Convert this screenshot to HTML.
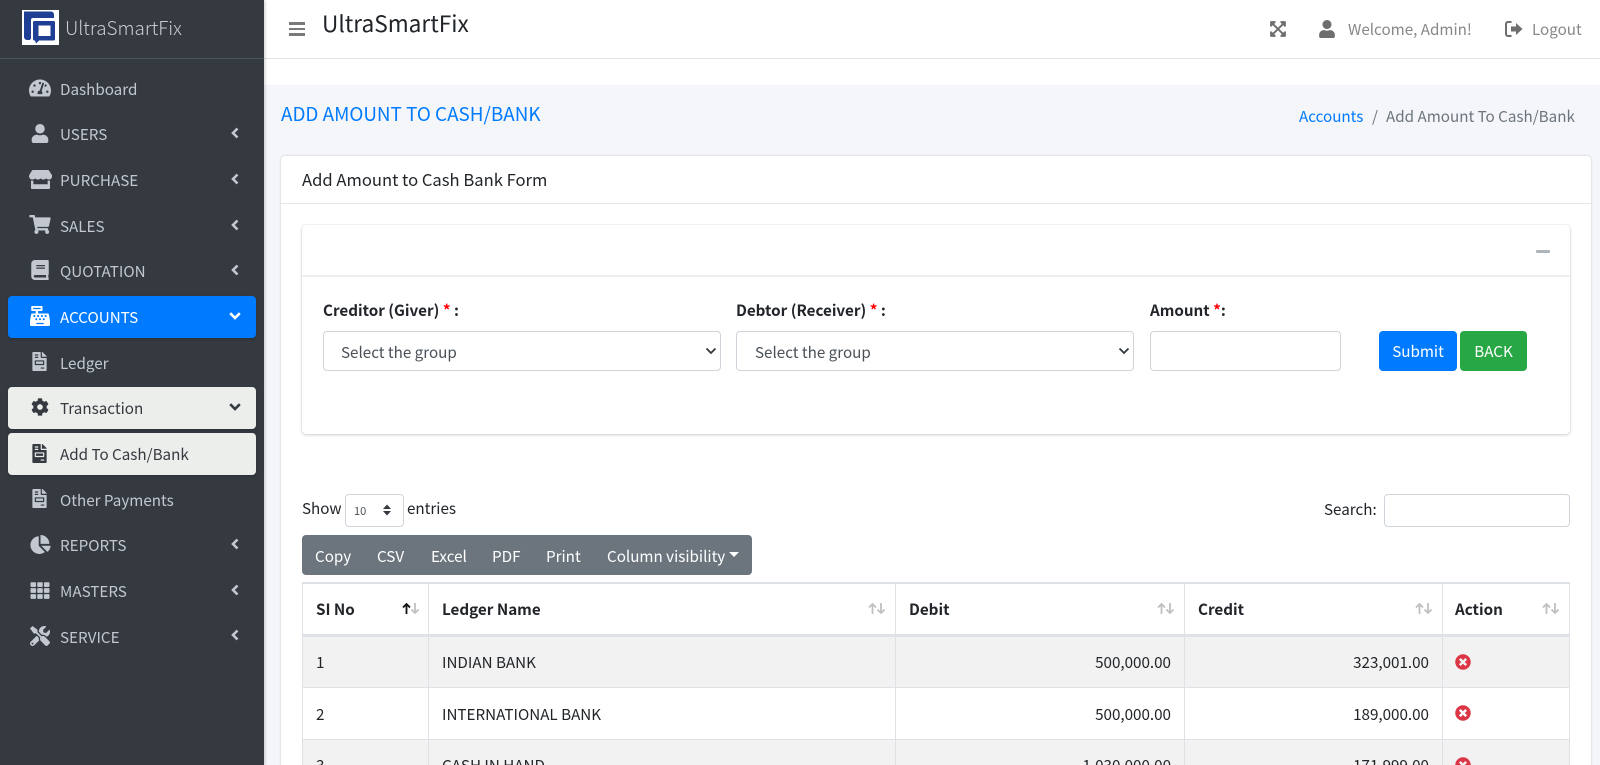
<!DOCTYPE html>
<html lang="en"><head><meta charset="utf-8"><title>UltraSmartFix</title>
<style>
*{box-sizing:border-box}
html,body{margin:0;padding:0;width:1600px;height:765px;overflow:hidden;background:#f4f6f9}
body{position:relative;font-family:"Noto Sans CJK JP","Liberation Sans",sans-serif;font-size:15.2px;color:#212529}
.t{position:absolute;white-space:nowrap;line-height:24px;height:24px}
.b{position:absolute}
svg.i{position:absolute;display:block;fill:currentColor}
.side{color:#c2c7d0}
.box{position:absolute;left:8px;width:248px;height:42px;border-radius:4px}
.r{text-align:right}
.th{font-weight:700}
.sort{position:absolute;top:603px;width:18px;height:11px;fill:none;stroke-width:1.8}
.ctl{position:absolute;background:#fff;border:1px solid #ced4da;border-radius:4px}
</style></head><body>
<svg width="0" height="0" style="position:absolute">
<symbol id="user" viewBox="0 0 448 512"><path d="M224 256c70.7 0 128-57.3 128-128S294.7 0 224 0 96 57.3 96 128s57.3 128 128 128zm89.6 32h-16.7c-22.2 10.2-46.9 16-72.9 16s-50.6-5.8-72.9-16h-16.7C60.2 288 0 348.2 0 422.4V464c0 26.5 21.5 48 48 48h352c26.5 0 48-21.5 48-48v-41.6c0-74.2-60.2-134.4-134.4-134.4z"/></symbol>
<symbol id="cart" viewBox="0 0 576 512"><path d="M528.12 301.319l47.273-208C578.806 78.301 567.391 64 551.99 64H159.208l-9.166-44.81C147.758 8.021 137.93 0 126.529 0H24C10.745 0 0 10.745 0 24v16c0 13.255 10.745 24 24 24h69.883l70.248 343.435C147.325 417.1 136 435.222 136 456c0 30.928 25.072 56 56 56s56-25.072 56-56c0-15.674-6.447-29.835-16.824-40h209.647C430.447 426.165 424 440.326 424 456c0 30.928 25.072 56 56 56s56-25.072 56-56c0-22.172-12.888-41.332-31.579-50.405l5.517-24.276c3.413-15.018-8.002-29.319-23.403-29.319H218.117l-6.545-32h293.145c11.206 0 20.92-7.754 23.403-18.681z"/></symbol>
<symbol id="cog" viewBox="0 0 512 512"><path d="M487.4 315.7l-42.6-24.6c4.3-23.2 4.3-47 0-70.2l42.6-24.6c4.9-2.8 7.1-8.6 5.5-14-11.1-35.6-30-67.8-54.7-94.6-3.8-4.1-10-5.1-14.8-2.3L380.8 110c-17.9-15.4-38.5-27.3-60.8-35.1V25.8c0-5.6-3.9-10.5-9.4-11.7-36.7-8.2-74.3-7.8-109.2 0-5.5 1.2-9.4 6.1-9.4 11.7V75c-22.2 7.9-42.8 19.8-60.8 35.1L88.7 85.5c-4.9-2.8-11-1.9-14.8 2.3-24.7 26.7-43.6 58.9-54.7 94.6-1.7 5.4.6 11.2 5.5 14L67.3 221c-4.3 23.2-4.3 47 0 70.2l-42.6 24.6c-4.9 2.8-7.1 8.6-5.5 14 11.1 35.6 30 67.8 54.7 94.6 3.8 4.1 10 5.1 14.8 2.3l42.6-24.6c17.9 15.4 38.5 27.3 60.8 35.1v49.2c0 5.6 3.9 10.5 9.4 11.7 36.7 8.2 74.3 7.8 109.2 0 5.5-1.2 9.4-6.1 9.4-11.7v-49.2c22.2-7.9 42.8-19.8 60.8-35.1l42.6 24.6c4.9 2.8 11 1.9 14.8-2.3 24.7-26.7 43.6-58.9 54.7-94.6 1.5-5.5-.7-11.3-5.6-14.1zM256 336c-44.1 0-80-35.9-80-80s35.9-80 80-80 80 35.9 80 80-35.9 80-80 80z"/></symbol>
<symbol id="xc" viewBox="0 0 512 512"><path d="M256 8C119 8 8 119 8 256s111 248 248 248 248-111 248-248S393 8 256 8zm121.6 313.1c4.7 4.7 4.7 12.3 0 17L338 377.6c-4.7 4.7-12.3 4.7-17 0L256 312l-65.1 65.6c-4.7 4.7-12.3 4.7-17 0L134.4 338c-4.7-4.7-4.7-12.3 0-17l65.6-65-65.6-65.1c-4.7-4.7-4.7-12.3 0-17l39.6-39.6c4.7-4.7 12.3-4.7 17 0l65 65.7 65.1-65.6c4.7-4.7 12.3-4.7 17 0l39.6 39.6c4.7 4.7 4.7 12.3 0 17L312 256l65.6 65.1z"/></symbol>
<symbol id="file" viewBox="0 0 384 512"><path d="M377 105L279.1 7c-4.5-4.5-10.6-7-17-7H256v128h128v-6.1c0-6.3-2.5-12.4-7-16.9zm-153 31V0H24C10.7 0 0 10.7 0 24v464c0 13.3 10.7 24 24 24h336c13.3 0 24-10.7 24-24V160H248c-13.2 0-24-10.8-24-24zM64 72c0-4.42 3.58-8 8-8h80c4.42 0 8 3.58 8 8v16c0 4.42-3.58 8-8 8H72c-4.42 0-8-3.58-8-8V72zm0 64c0-4.42 3.58-8 8-8h80c4.42 0 8 3.58 8 8v16c0 4.42-3.58 8-8 8H72c-4.42 0-8-3.58-8-8v-16zm256 304c0 4.42-3.58 8-8 8h-80c-4.42 0-8-3.58-8-8v-16c0-4.42 3.58-8 8-8h80c4.42 0 8 3.58 8 8v16zm0-200v96c0 8.84-7.16 16-16 16H80c-8.84 0-16-7.16-16-16v-96c0-8.84 7.16-16 16-16h224c8.84 0 16 7.16 16 16zm-32 16H96v64h192v-64z" fill-rule="evenodd"/></symbol>
</svg>

<!-- top navbar -->
<div class="b" style="left:264px;top:0;width:1336px;height:85px;background:#fff"></div>
<div class="b" style="left:264px;top:58px;width:1336px;height:1px;background:#dee2e6"></div>
<div class="b" style="left:289px;top:22px;width:16px;height:2.5px;background:#7a7a7a"></div>
<div class="b" style="left:289px;top:27.500px;width:16px;height:2.5px;background:#7a7a7a"></div>
<div class="b" style="left:289px;top:33px;width:16px;height:2.5px;background:#7a7a7a"></div>
<div class="t" style="left:322px;top:11px;font-size:22.65px;color:#212529">UltraSmartFix</div>
<svg class="i" style="left:1270px;top:20px;color:#6e6e6e" width="16" height="18" viewBox="0 0 448 512"><path d="M448 344v112a23.94 23.94 0 0 1-24 24H312c-21.39 0-32.09-25.9-17-41l36.2-36.2L224 295.6 116.77 402.9 153 439c15.09 15.1 4.39 41-17 41H24a23.94 23.94 0 0 1-24-24V344c0-21.4 25.89-32.1 41-17l36.19 36.2L184.46 256 77.18 148.7 41 185c-15.1 15.1-41 4.4-41-17V56a23.94 23.94 0 0 1 24-24h112c21.39 0 32.09 25.9 17 41l-36.2 36.2L224 216.4l107.23-107.3L295 73c-15.09-15.1-4.39-41 17-41h112a23.94 23.94 0 0 1 24 24v112c0 21.4-25.89 32.1-41 17l-36.19-36.2L263.54 256l107.28 107.3L407 327.1c15.1-15.2 41-4.5 41 16.9z"/></svg>
<svg class="i" style="left:1319px;top:20px;color:#6e6e6e" width="16" height="18"><use href="#user"/></svg>
<div class="t" style="left:1348px;top:17px;color:#888">Welcome, Admin!</div>
<svg class="i" style="left:1505px;top:20px;color:#6e6e6e" width="18" height="18" viewBox="0 0 18 18"><path d="M6.500 2H3a2 2 0 0 0-2 2v10a2 2 0 0 0 2 2h3.500" fill="none" stroke="currentColor" stroke-width="2"/><path d="M17.500 9l-6.500-6v3.500H6v5h5V15z"/></svg>
<div class="t" style="left:1532px;top:17px;color:#888">Logout</div>

<!-- sidebar -->
<div class="b" style="left:0;top:0;width:264px;height:765px;background:#343a40;box-shadow:1px 0 3px rgba(0,0,0,.2)"></div>
<div class="b" style="left:0;top:58px;width:264px;height:1px;background:#4b545c"></div>
<svg class="b" style="left:22px;top:10px" width="37" height="35" viewBox="0 0 37 35"><rect width="37" height="35" fill="#fff"/><path d="M2 1.500h27a3 3 0 0 1 3 3V8H11a2 2 0 0 0-2 2v18c0 1-.7 2-2 2H5a3 3 0 0 1-3-3z" fill="#1f3f94"/><path d="M12.500 11h19a1.500 1.500 0 0 1 1.500 1.500V29a1.500 1.500 0 0 1-1.500 1.500H17l-3 3-1-3h-.5a1.500 1.500 0 0 1-1.500-1.500V12.500a1.500 1.500 0 0 1 1.500-1.500zM16.500 15.500v10.500h12V15.500z" fill="#1f3f94" fill-rule="evenodd"/></svg>
<div class="t" style="left:65px;top:16px;font-size:18.85px;font-weight:300;color:#c8ccd2">UltraSmartFix</div>

<div class="box" style="top:296px;background:#007bff;box-shadow:0 1px 3px rgba(0,0,0,.2)"></div>
<div class="box" style="top:387px;background:#eceeec;box-shadow:0 1px 3px rgba(0,0,0,.2)"></div>
<div class="box" style="top:433px;background:#eceeec;box-shadow:0 1px 3px rgba(0,0,0,.2)"></div>

<div class="t side" style="left:60px;top:77px">Dashboard</div>
<div class="t side" style="left:60px;top:122px">USERS</div>
<div class="t side" style="left:60px;top:168px">PURCHASE</div>
<div class="t side" style="left:60px;top:214px">SALES</div>
<div class="t side" style="left:60px;top:259px">QUOTATION</div>
<div class="t" style="left:60px;top:305px;color:#fff">ACCOUNTS</div>
<div class="t side" style="left:60px;top:351px">Ledger</div>
<div class="t" style="left:60px;top:396px;color:#343a40">Transaction</div>
<div class="t" style="left:60px;top:442px;color:#343a40">Add To Cash/Bank</div>
<div class="t side" style="left:60px;top:488px">Other Payments</div>
<div class="t side" style="left:60px;top:533px">REPORTS</div>
<div class="t side" style="left:60px;top:579px">MASTERS</div>
<div class="t side" style="left:60px;top:625px">SERVICE</div>

<svg class="i side" style="left:29px;top:78px" width="22" height="20" viewBox="0 0 576 512"><path d="M288 32C128.94 32 0 160.94 0 320c0 52.8 14.25 102.26 39.06 144.8 5.61 9.62 16.3 15.2 27.44 15.2h443c11.14 0 21.83-5.58 27.44-15.2C561.75 422.26 576 372.8 576 320c0-159.06-128.94-288-288-288zm0 64c14.71 0 26.58 10.13 30.32 23.65-1.11 2.26-2.64 4.23-3.45 6.67l-9.22 27.67c-5.13 3.49-10.97 6.01-17.64 6.01-17.67 0-32-14.33-32-32S270.33 96 288 96zM96 384c-17.67 0-32-14.33-32-32s14.33-32 32-32 32 14.33 32 32-14.33 32-32 32zm48-160c-17.67 0-32-14.33-32-32s14.33-32 32-32 32 14.33 32 32-14.33 32-32 32zm246.77-72.41l-61.33 184C343.13 347.33 352 364.54 352 384c0 11.72-3.38 22.55-8.88 32H232.88c-5.5-9.45-8.88-20.28-8.88-32 0-33.94 26.5-61.43 59.9-63.59l61.34-184.01c4.17-12.56 17.73-19.45 30.36-15.17 12.57 4.19 19.35 17.79 15.17 30.36zm14.66 57.2l15.52-46.55c3.47-1.29 7.13-2.23 11.05-2.23 17.67 0 32 14.33 32 32s-14.33 32-32 32c-11.38-.01-20.89-6.28-26.57-15.22zM480 384c-17.67 0-32-14.33-32-32s14.33-32 32-32 32 14.33 32 32-14.33 32-32 32z"/></svg>
<svg class="i side" style="left:31px;top:124px" width="18" height="19"><use href="#user"/></svg>
<svg class="i side" style="left:29px;top:170px" width="23" height="19" viewBox="0 0 616 512"><path d="M602 118.6L537.1 15C531.3 5.7 521 0 510 0H106C95 0 84.7 5.7 78.9 15L14 118.6c-33.9 54.1-3.9 129.3 59.4 137.9 4.6.6 9.2.9 13.7.9 29.9 0 56.4-13.1 74.6-33.4 18.2 20.3 44.8 33.4 74.6 33.4 29.9 0 56.4-13.1 74.6-33.4 18.2 20.3 44.8 33.4 74.6 33.4 29.9 0 56.4-13.1 74.6-33.4 18.3 20.3 44.8 33.4 74.6 33.4 4.6 0 9.1-.3 13.7-.9 63.5-8.5 93.6-83.7 59.6-137.9zM529.5 288c-10 0-19.9-1.5-29.5-3.8V384H116v-99.8c-9.6 2.2-19.5 3.8-29.5 3.8-6 0-12.1-.4-18-1.2-5.6-.8-11.1-2.1-16.4-3.6V480c0 17.7 14.3 32 32 32h448c17.7 0 32-14.3 32-32V283.2c-5.4 1.6-10.8 2.9-16.4 3.6-6.1.8-12.1 1.2-18.2 1.2z"/></svg>
<svg class="i side" style="left:29px;top:215px" width="22" height="19"><use href="#cart"/></svg>
<svg class="i side" style="left:31px;top:260px" width="18" height="20" viewBox="0 0 448 512"><path d="M448 360V24c0-13.3-10.7-24-24-24H96C43 0 0 43 0 96v320c0 53 43 96 96 96h328c13.3 0 24-10.7 24-24v-16c0-7.5-3.5-14.3-8.9-18.7-4.2-15.4-4.2-59.3 0-74.7 5.4-4.3 8.9-11.1 8.9-18.6zM128 134c0-3.3 2.7-6 6-6h212c3.3 0 6 2.7 6 6v20c0 3.3-2.7 6-6 6H134c-3.3 0-6-2.7-6-6v-20zm0 64c0-3.3 2.7-6 6-6h212c3.3 0 6 2.7 6 6v20c0 3.3-2.7 6-6 6H134c-3.3 0-6-2.7-6-6v-20zm253.4 250H96c-17.7 0-32-14.3-32-32 0-17.6 14.4-32 32-32h285.4c-1.9 17.1-1.9 46.9 0 64z"/></svg>
<svg class="i" style="left:30px;top:306px;color:#fff" width="20" height="20" viewBox="0 0 512 512"><path d="M511.1 378.8l-26.7-160c-2.6-15.4-15.9-26.7-31.6-26.7H208v-64h96c8.8 0 16-7.2 16-16V16c0-8.8-7.2-16-16-16H48c-8.8 0-16 7.2-16 16v96c0 8.8 7.2 16 16 16h96v64H59.1c-15.6 0-29 11.3-31.6 26.7L.8 378.7c-.6 3.5-.9 7-.9 10.5V480c0 17.7 14.3 32 32 32h448c17.7 0 32-14.3 32-32v-90.7c.1-3.5-.2-7-.8-10.5zM280 248c0-8.8 7.2-16 16-16h16c8.8 0 16 7.2 16 16v16c0 8.8-7.2 16-16 16h-16c-8.8 0-16-7.2-16-16v-16zm-32 64h16c8.8 0 16 7.2 16 16v16c0 8.8-7.2 16-16 16h-16c-8.8 0-16-7.2-16-16v-16c0-8.8 7.2-16 16-16zm-32-80c8.8 0 16 7.2 16 16v16c0 8.8-7.2 16-16 16h-16c-8.8 0-16-7.2-16-16v-16c0-8.8 7.2-16 16-16h16zM80 80V48h192v32H80zm40 200h-16c-8.8 0-16-7.2-16-16v-16c0-8.8 7.2-16 16-16h16c8.8 0 16 7.2 16 16v16c0 8.8-7.2 16-16 16zm16 64v-16c0-8.8 7.2-16 16-16h16c8.8 0 16 7.2 16 16v16c0 8.8-7.2 16-16 16h-16c-8.8 0-16-7.2-16-16zm216 112c0 4.4-3.6 8-8 8H168c-4.4 0-8-3.6-8-8v-16c0-4.4 3.6-8 8-8h176c4.4 0 8 3.6 8 8v16zm24-112c0 8.8-7.2 16-16 16h-16c-8.8 0-16-7.2-16-16v-16c0-8.8 7.2-16 16-16h16c8.8 0 16 7.2 16 16v16zm48-80c0 8.8-7.2 16-16 16h-16c-8.8 0-16-7.2-16-16v-16c0-8.8 7.2-16 16-16h16c8.8 0 16 7.2 16 16v16z"/></svg>
<svg class="i side" style="left:32px;top:352px" width="15" height="19"><use href="#file"/></svg>
<svg class="i" style="left:31px;top:398px;color:#343a40" width="18" height="18"><use href="#cog"/></svg>
<svg class="i" style="left:32px;top:444px;color:#343a40" width="15" height="19"><use href="#file"/></svg>
<svg class="i side" style="left:32px;top:489px" width="15" height="19"><use href="#file"/></svg>
<svg class="i side" style="left:30px;top:535px" width="21" height="19" viewBox="0 0 544 512"><path d="M527.79 288H290.5l158.03 158.03c6.04 6.04 15.98 6.53 22.19.68 38.7-36.46 65.32-85.61 73.13-140.86 1.34-9.46-6.51-17.85-16.06-17.85zm-15.83-64.8C503.72 103.74 408.26 8.28 288.8.04 279.68-.59 272 7.1 272 16.24V240h223.77c9.14 0 16.82-7.68 16.19-16.8zM224 288V50.71c0-9.55-8.39-17.4-17.84-16.06C86.99 51.49-4.1 155.6.14 280.37 4.5 408.51 114.83 513.59 243.03 511.98c50.4-.63 96.97-16.87 135.26-44.03 7.9-5.6 8.42-17.23 1.57-24.08z"/></svg>
<svg class="i side" style="left:30px;top:581px" width="20" height="19" viewBox="0 0 512 512"><path d="M149.333 56v80c0 13.255-10.745 24-24 24H24c-13.255 0-24-10.745-24-24V56c0-13.255 10.745-24 24-24h101.333c13.255 0 24 10.745 24 24zm181.334 240v-80c0-13.255-10.745-24-24-24H205.333c-13.255 0-24 10.745-24 24v80c0 13.255 10.745 24 24 24h101.333c13.256 0 24.001-10.745 24.001-24zm32-240v80c0 13.255 10.745 24 24 24H488c13.255 0 24-10.745 24-24V56c0-13.255-10.745-24-24-24H386.667c-13.255 0-24 10.745-24 24zm-32 80V56c0-13.255-10.745-24-24-24H205.333c-13.255 0-24 10.745-24 24v80c0 13.255 10.745 24 24 24h101.333c13.256 0 24.001-10.745 24.001-24zm-205.334 56H24c-13.255 0-24 10.745-24 24v80c0 13.255 10.745 24 24 24h101.333c13.255 0 24-10.745 24-24v-80c0-13.255-10.745-24-24-24zM0 376v80c0 13.255 10.745 24 24 24h101.333c13.255 0 24-10.745 24-24v-80c0-13.255-10.745-24-24-24H24c-13.255 0-24 10.745-24 24zm386.667-56H488c13.255 0 24-10.745 24-24v-80c0-13.255-10.745-24-24-24H386.667c-13.255 0-24 10.745-24 24v80c0 13.255 10.745 24 24 24zm0 160H488c13.255 0 24-10.745 24-24v-80c0-13.255-10.745-24-24-24H386.667c-13.255 0-24 10.745-24 24v80c0 13.255 10.745 24 24 24zM181.333 376v80c0 13.255 10.745 24 24 24h101.333c13.255 0 24-10.745 24-24v-80c0-13.255-10.745-24-24-24H205.333c-13.255 0-24 10.745-24 24z"/></svg>
<svg class="i side" style="left:30px;top:626px" width="20" height="20" viewBox="0 0 512 512"><path d="M501.1 395.7L384 278.6c-23.1-23.1-57.6-27.6-85.4-13.9L192 158.1V96L64 0 0 64l96 128h62.1l106.6 106.6c-13.6 27.8-9.2 62.3 13.9 85.4l117.1 117.1c14.6 14.6 38.2 14.6 52.7 0l52.7-52.7c14.5-14.6 14.5-38.2 0-52.7zM331.7 225c28.3 0 54.9 11 74.9 31l19.4 19.4c15.8-6.9 30.8-16.5 43.8-29.5 37.1-37.1 49.7-89.3 37.9-136.7-2.2-9-13.5-12.1-20.1-5.5l-74.4 74.4-67.9-11.3L334 98.9l74.4-74.4c6.6-6.6 3.4-17.9-5.7-20.2-47.4-11.7-99.6.9-136.6 37.9-28.5 28.5-41.9 66.1-41.2 103.6l82.1 82.1c8.1-1.9 16.5-2.9 24.7-2.9zm-103.9 82l-56.7-56.7L18.7 402.8c-25 25-25 65.5 0 90.5s65.5 25 90.5 0l123.6-123.6c-7.6-19.9-9.9-41.6-5-62.7zM64 472c-13.2 0-24-10.8-24-24 0-13.3 10.7-24 24-24s24 10.7 24 24c0 13.2-10.7 24-24 24z"/></svg>

<svg class="b" style="left:230px;top:127px" width="10" height="12" fill="none" stroke="#c2c7d0" stroke-width="2.6"><path d="M7.500 1.500L3 6l4.500 4.500"/></svg>
<svg class="b" style="left:230px;top:173px" width="10" height="12" fill="none" stroke="#c2c7d0" stroke-width="2.6"><path d="M7.500 1.500L3 6l4.500 4.500"/></svg>
<svg class="b" style="left:230px;top:219px" width="10" height="12" fill="none" stroke="#c2c7d0" stroke-width="2.6"><path d="M7.500 1.500L3 6l4.500 4.500"/></svg>
<svg class="b" style="left:230px;top:264px" width="10" height="12" fill="none" stroke="#c2c7d0" stroke-width="2.6"><path d="M7.500 1.500L3 6l4.500 4.500"/></svg>
<svg class="b" style="left:229px;top:311px" width="12" height="10" fill="none" stroke="#fff" stroke-width="2.6"><path d="M1.200 2.200L6 7l4.800-4.800"/></svg>
<svg class="b" style="left:229px;top:402px" width="12" height="10" fill="none" stroke="#343a40" stroke-width="2.6"><path d="M1.200 2.200L6 7l4.800-4.800"/></svg>
<svg class="b" style="left:230px;top:538px" width="10" height="12" fill="none" stroke="#c2c7d0" stroke-width="2.6"><path d="M7.500 1.500L3 6l4.500 4.500"/></svg>
<svg class="b" style="left:230px;top:584px" width="10" height="12" fill="none" stroke="#c2c7d0" stroke-width="2.6"><path d="M7.500 1.500L3 6l4.500 4.500"/></svg>
<svg class="b" style="left:230px;top:629px" width="10" height="12" fill="none" stroke="#c2c7d0" stroke-width="2.6"><path d="M7.500 1.500L3 6l4.500 4.500"/></svg>

<!-- page header -->
<div class="t" style="left:281px;top:102px;font-size:18.85px;color:#007bff">ADD AMOUNT TO CASH/BANK</div>
<div class="t" style="left:1299px;top:104px;color:#007bff">Accounts</div>
<div class="t" style="left:1372px;top:104px;color:#6c757d">/</div>
<div class="t" style="left:1386px;top:104px;color:#6c757d">Add Amount To Cash/Bank</div>

<!-- main card -->
<div class="b" style="left:281px;top:156px;width:1310px;height:640px;background:#fff;border-radius:4px;box-shadow:0 0 2px rgba(0,0,0,.2)"></div>
<div class="b" style="left:281px;top:203px;width:1310px;height:1px;background:#e4e6e8"></div>
<div class="t" style="left:302px;top:167px;font-size:16.6px;color:#212529">Add Amount to Cash Bank Form</div>

<!-- inner card -->
<div class="b" style="left:302px;top:225px;width:1268px;height:209px;background:#fff;border-radius:4px;box-shadow:0 0 1px rgba(0,0,0,.2),0 1px 3px rgba(0,0,0,.18)"></div>
<div class="b" style="left:302px;top:275px;width:1268px;height:2px;background:#eceeef"></div>
<div class="b" style="left:1536px;top:250px;width:14px;height:3px;background:#adb5bd;border-radius:1px"></div>

<div class="t" style="left:323px;top:298px;font-weight:700">Creditor (Giver) <span style="color:#f00">*</span> :</div>
<div class="t" style="left:736px;top:298px;font-weight:700">Debtor (Receiver) <span style="color:#f00">*</span> :</div>
<div class="t" style="left:1150px;top:298px;font-weight:700">Amount <span style="color:#f00">*</span>:</div>

<div class="ctl" style="left:323px;top:331px;width:398px;height:40px"></div>
<div class="t" style="left:341px;top:340px;color:#495057">Select the group</div>
<svg class="b" style="left:705px;top:347px" width="12" height="8" fill="none" stroke="#343a40" stroke-width="1.8"><path d="M1.500 1.500L6 6l4.500-4.500"/></svg>
<div class="ctl" style="left:736px;top:331px;width:398px;height:40px"></div>
<div class="t" style="left:755px;top:340px;color:#495057">Select the group</div>
<svg class="b" style="left:1118px;top:347px" width="12" height="8" fill="none" stroke="#343a40" stroke-width="1.8"><path d="M1.500 1.500L6 6l4.500-4.500"/></svg>
<div class="ctl" style="left:1150px;top:331px;width:191px;height:40px"></div>
<div class="b" style="left:1379px;top:331px;width:78px;height:40px;background:#007bff;border-radius:4px"></div>
<div class="t" style="left:1379px;top:339px;width:78px;text-align:center;color:#fff">Submit</div>
<div class="b" style="left:1460px;top:331px;width:67px;height:40px;background:#28a745;border-radius:4px"></div>
<div class="t" style="left:1460px;top:339px;width:67px;text-align:center;color:#fff">BACK</div>

<!-- datatable controls -->
<div class="t" style="left:302px;top:496px">Show</div>
<div class="ctl" style="left:345px;top:494px;width:59px;height:33px"></div>
<div class="t" style="left:354px;top:499px;font-size:11px;color:#495057">10</div>
<svg class="b" style="left:382px;top:504px" width="10" height="12" fill="#343a40"><path d="M1 5l4-4.500 4 4.500zM1 7h8l-4 4.500z"/></svg>
<div class="t" style="left:407px;top:496px">entries</div>
<div class="t" style="left:1324px;top:497px">Search:</div>
<div class="ctl" style="left:1384px;top:494px;width:186px;height:33px"></div>

<div class="b" style="left:302px;top:535px;width:450px;height:40px;background:#6c757d;border-radius:4px"></div>
<div class="t" style="left:315px;top:544px;color:#fff">Copy</div>
<div class="t" style="left:377px;top:544px;color:#fff">CSV</div>
<div class="t" style="left:431px;top:544px;color:#fff">Excel</div>
<div class="t" style="left:492px;top:544px;color:#fff">PDF</div>
<div class="t" style="left:546px;top:544px;color:#fff">Print</div>
<div class="t" style="left:607px;top:544px;color:#fff">Column visibility</div>
<div class="b" style="left:729px;top:552px;width:0;height:0;border:5px solid transparent;border-top-color:#fff;border-bottom:0"></div>

<!-- table -->
<div class="b" style="left:302px;top:637px;width:1268px;height:51px;background:#f2f2f2"></div>
<div class="b" style="left:302px;top:740px;width:1268px;height:25px;background:#f2f2f2"></div>
<div class="b" style="left:302px;top:582px;width:1268px;height:2px;background:#dee2e6"></div>
<div class="b" style="left:302px;top:634px;width:1268px;height:3px;background:#dee2e6"></div>
<div class="b" style="left:302px;top:687px;width:1268px;height:1px;background:#dee2e6"></div>
<div class="b" style="left:302px;top:739px;width:1268px;height:1px;background:#dee2e6"></div>
<div class="b" style="left:302px;top:582px;width:1px;height:183px;background:#dee2e6"></div>
<div class="b" style="left:428px;top:582px;width:1px;height:183px;background:#dee2e6"></div>
<div class="b" style="left:895px;top:582px;width:1px;height:183px;background:#dee2e6"></div>
<div class="b" style="left:1184px;top:582px;width:1px;height:183px;background:#dee2e6"></div>
<div class="b" style="left:1442px;top:582px;width:1px;height:183px;background:#dee2e6"></div>
<div class="b" style="left:1569px;top:582px;width:1px;height:183px;background:#dee2e6"></div>

<div class="t th" style="left:316px;top:597px">SI No</div>
<div class="t th" style="left:442px;top:597px">Ledger Name</div>
<div class="t th" style="left:909px;top:597px">Debit</div>
<div class="t th" style="left:1198px;top:597px">Credit</div>
<div class="t th" style="left:1455px;top:597px">Action</div>

<svg class="sort" style="left:402px" viewBox="0 0 18 11"><path d="M4.500 11V1M1 4.500L4.500 1 8 4.500" stroke="#111"/><path d="M13 0v10M9.500 6.500L13 10l3.500-3.500" stroke="#c0c0c0"/></svg>
<svg class="sort" style="left:868px" viewBox="0 0 18 11"><path d="M4.500 11V1M1 4.500L4.500 1 8 4.500" stroke="#c0c0c0"/><path d="M13 0v10M9.500 6.500L13 10l3.500-3.500" stroke="#c0c0c0"/></svg>
<svg class="sort" style="left:1157px" viewBox="0 0 18 11"><path d="M4.500 11V1M1 4.500L4.500 1 8 4.500" stroke="#c0c0c0"/><path d="M13 0v10M9.500 6.500L13 10l3.500-3.500" stroke="#c0c0c0"/></svg>
<svg class="sort" style="left:1415px" viewBox="0 0 18 11"><path d="M4.500 11V1M1 4.500L4.500 1 8 4.500" stroke="#c0c0c0"/><path d="M13 0v10M9.500 6.500L13 10l3.500-3.500" stroke="#c0c0c0"/></svg>
<svg class="sort" style="left:1542px" viewBox="0 0 18 11"><path d="M4.500 11V1M1 4.500L4.500 1 8 4.500" stroke="#c0c0c0"/><path d="M13 0v10M9.500 6.500L13 10l3.500-3.500" stroke="#c0c0c0"/></svg>

<div class="t" style="left:316px;top:650px">1</div>
<div class="t" style="left:442px;top:650px">INDIAN BANK</div>
<div class="t r" style="left:971px;width:200px;top:650px">500,000.00</div>
<div class="t r" style="left:1229px;width:200px;top:650px">323,001.00</div>
<svg class="i" style="left:1455px;top:654px;color:#dc3545" width="16" height="16"><use href="#xc"/></svg>

<div class="t" style="left:316px;top:702px">2</div>
<div class="t" style="left:442px;top:702px">INTERNATIONAL BANK</div>
<div class="t r" style="left:971px;width:200px;top:702px">500,000.00</div>
<div class="t r" style="left:1229px;width:200px;top:702px">189,000.00</div>
<svg class="i" style="left:1455px;top:705px;color:#dc3545" width="16" height="16"><use href="#xc"/></svg>

<div class="t" style="left:316px;top:753px">3</div>
<div class="t" style="left:442px;top:753px">CASH IN HAND</div>
<div class="t r" style="left:971px;width:200px;top:753px">1,030,000.00</div>
<div class="t r" style="left:1229px;width:200px;top:753px">171,999.00</div>
<svg class="i" style="left:1455px;top:757px;color:#dc3545" width="16" height="16"><use href="#xc"/></svg>
</body></html>
